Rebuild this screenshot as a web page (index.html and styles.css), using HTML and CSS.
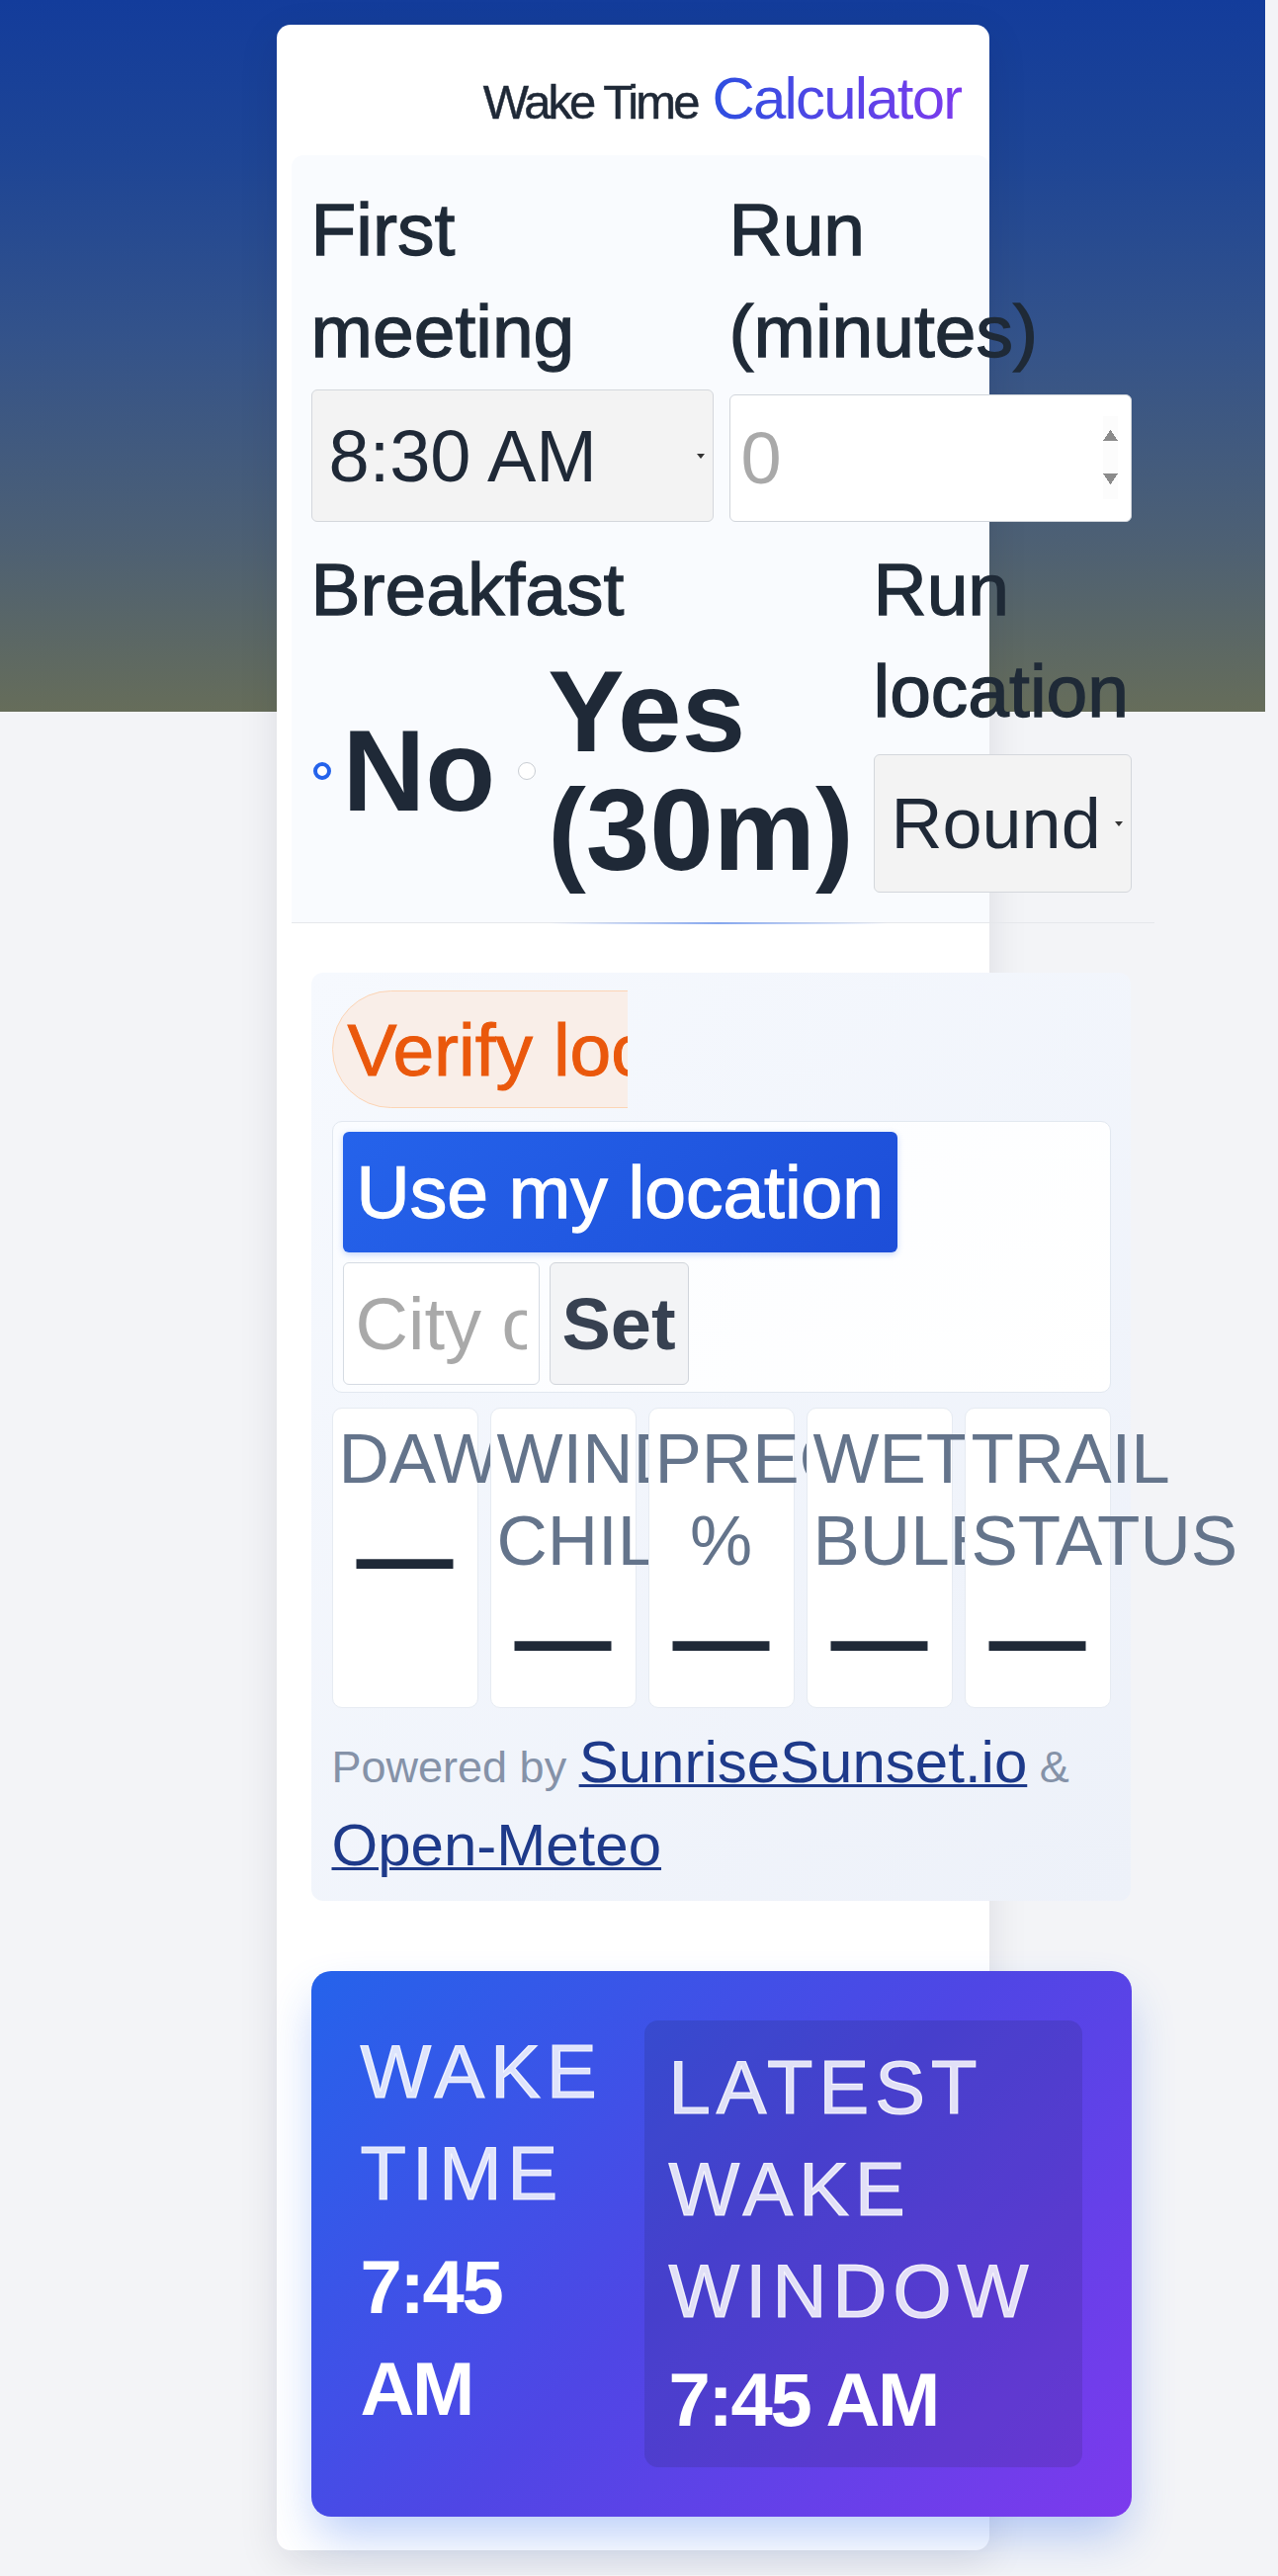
FILE: index.html
```html
<!DOCTYPE html>
<html lang="en">
<head>
<meta charset="utf-8">
<title>Wake Time Calculator</title>
<link rel="stylesheet" href="styles.css">
</head>
<body>
<div class="page">
  <main class="card">
    <header class="card-header">
      <h1 class="title"><span class="title-lead">Wake Time</span> <span class="title-accent">Calculator</span></h1>
    </header>

    <section class="form">
      <div class="row row-top">
        <div class="field">
          <label class="field-label" for="meeting">First meeting</label>
          <div class="select-wrap select-wrap-meeting">
            <select id="meeting" class="select select-meeting"><option>8:30 AM</option></select>
          </div>
        </div>
        <div class="field">
          <label class="field-label" for="run">Run (minutes)</label>
          <input id="run" class="number" type="number" placeholder="0" min="0">
        </div>
      </div>
      <div class="row row-bottom">
        <div class="field">
          <span class="field-label">Breakfast</span>
          <div class="radios">
            <label class="radio"><input type="radio" name="breakfast" checked><span>No</span></label>
            <label class="radio"><input type="radio" name="breakfast"><span>Yes (30m)</span></label>
          </div>
        </div>
        <div class="field">
          <label class="field-label" for="loc">Run location</label>
          <div class="select-wrap select-wrap-loc">
            <select id="loc" class="select select-loc"><option>Round trip</option></select>
          </div>
        </div>
      </div>
    </section>

    <div class="divider"></div>

    <section class="location">
      <div class="status-clip"><span class="status-pill">Verify location</span></div>
      <div class="loc-controls">
        <button class="btn-primary" type="button">Use my location</button>
        <div class="city-row">
          <input class="city" type="text" placeholder="City or ZIP">
          <button class="btn-set" type="button">Set</button>
        </div>
      </div>
      <div class="stats">
        <div class="stat"><div class="stat-label">Dawn</div><div class="stat-value">—</div></div>
        <div class="stat"><div class="stat-label">Wind chill</div><div class="stat-value">—</div></div>
        <div class="stat"><div class="stat-label">Precip %</div><div class="stat-value">—</div></div>
        <div class="stat"><div class="stat-label">Wet bulb</div><div class="stat-value">—</div></div>
        <div class="stat"><div class="stat-label">Trail status</div><div class="stat-value">—</div></div>
      </div>
      <p class="powered">Powered by <a href="#">SunriseSunset.io</a> &amp; <a href="#">Open-Meteo</a></p>
    </section>

    <section class="result">
      <div class="result-main">
        <div class="result-label">Wake time</div>
        <div class="result-value">7:45 AM</div>
      </div>
      <div class="result-panel">
        <div class="result-label">Latest wake window</div>
        <div class="result-value">7:45 AM</div>
      </div>
    </section>
  </main>
</div>
</body>
</html>
```

FILE: styles.css
```css
*, *::before, *::after { box-sizing: border-box; }

html, body { margin: 0; }

body {
  background:
    linear-gradient(180deg, #133c9b 0%, #1e4595 22%, #34538a 48%, #4d6074 76%, #666d5a 100%) 0 0 / 1280px 720px no-repeat,
    #f3f4f7;
  font-family: "Liberation Sans", Arial, sans-serif;
  color: #1f2937;
}

.page {
  width: 1280px;
  padding: 25px 0;
}

.card {
  width: 721px;
  margin: 0 auto;
  background: #ffffff;
  border-radius: 14px;
  box-shadow: 0 12px 40px rgba(15, 23, 42, 0.10);
  padding-bottom: 34px;
}

/* Header */
.card-header {
  height: 132px;
  padding: 41px 28px 0 0;
  text-align: right;
}

.title {
  margin: 0;
  font-size: 60px;
  line-height: 68px;
  font-weight: 400;
  letter-spacing: -0.03em;
  white-space: nowrap;
}

.title-lead {
  font-size: 49px;
  letter-spacing: -0.06em;
  color: #1f2937;
  -webkit-text-stroke: 0.5px #1f2937;
}

.title-accent {
  background: linear-gradient(90deg, #2d4fe0, #7c3aed);
  -webkit-background-clip: text;
  background-clip: text;
  color: transparent;
}

/* Form */
.form {
  margin-left: 15px;
  width: 706px;
  padding: 24px 0 30px 20px;
  background: #f9fbfe;
  border-radius: 12px 12px 0 0;
}

.row { display: grid; }

.row-top {
  grid-template-columns: 407px 407px;
  column-gap: 16px;
}

.row-bottom {
  grid-template-columns: 552px 261px;
  column-gap: 17px;
  margin-top: 17px;
}

.field {
  display: flex;
  flex-direction: column;
  align-items: stretch;
  min-width: 0;
}

.field-label {
  display: block;
  font-size: 75px;
  line-height: 103px;
  color: #1f2a37;
  -webkit-text-stroke: 1.3px #1f2a37;
}

.select-wrap {
  position: relative;
}

.select-wrap-meeting { margin-top: 7px; }
.select-wrap-loc { margin-top: 12px; }

.select-wrap::after {
  content: "";
  position: absolute;
  right: 9px;
  top: 50%;
  margin-top: -2px;
  border-left: 4px solid transparent;
  border-right: 4px solid transparent;
  border-top: 5px solid #333333;
}

.select {
  -webkit-appearance: none;
  appearance: none;
  display: block;
  width: 100%;
  margin: 0;
  padding: 0 26px 0 17px;
  font-family: inherit;
  font-size: 74px;
  color: #1f2937;
  background: #f3f3f3;
  border: 1px solid #d4d7dc;
  border-radius: 6px;
}

.select-meeting { height: 134px; }

.select-loc {
  height: 140px;
  font-size: 72px;
}

.number {
  display: block;
  width: 100%;
  height: 129px;
  margin: 12px 0 0;
  padding: 0 13px 0 11px;
  font-family: inherit;
  font-size: 74px;
  color: #1f2937;
  background: #ffffff;
  border: 1px solid #d1d5db;
  border-radius: 6px;
}

.number::placeholder { color: #a9a9a9; }
.number::-webkit-inner-spin-button { opacity: 1; }

.radios {
  display: flex;
  align-items: center;
  column-gap: 21px;
  width: 552px;
  margin-top: 12px;
}

.radio {
  display: flex;
  align-items: center;
  gap: 12px;
  font-size: 116px;
  line-height: 120px;
  font-weight: 700;
  color: #1f2937;
}

.radio:first-child { flex: none; }

.radio input {
  -webkit-appearance: none;
  appearance: none;
  flex: none;
  width: 18px;
  height: 18px;
  margin: 0 0 0 2px;
  border-radius: 50%;
  border: 1.5px solid #c9cdd3;
  background: #ffffff;
}

.radio input:checked {
  border: 4px solid #2563eb;
}

/* Divider */
.divider {
  position: relative;
  margin-left: 15px;
  width: 873px;
  height: 1px;
  background: #e5e7eb;
}

.divider::after {
  content: "";
  position: absolute;
  left: 30%;
  top: 0;
  width: 39%;
  height: 2px;
  background: linear-gradient(90deg, rgba(96, 140, 235, 0), rgba(96, 140, 235, 0.75), rgba(96, 140, 235, 0));
}

/* Location */
.location {
  margin: 50px 0 0 35px;
  width: 829px;
  padding: 18px 21px 9px;
  border-radius: 12px;
  background: linear-gradient(135deg, #f6f9fe, #edf1f9);
}

.status-clip {
  width: 299px;
  height: 119px;
  overflow: hidden;
}

.status-pill {
  display: inline-flex;
  align-items: center;
  height: 119px;
  padding: 0 30px 0 15px;
  border: 1.5px solid #fcd4b4;
  border-radius: 60px;
  background: #f9eee8;
  color: #ea580c;
  font-size: 75px;
  white-space: nowrap;
  -webkit-text-stroke: 1px #ea580c;
}

.loc-controls {
  margin-top: 13px;
  width: 788px;
  padding: 10px 10px 7px;
  border: 1px solid #e2e8f0;
  border-radius: 10px;
  background: linear-gradient(135deg, #fafcff, #ffffff);
}

.btn-primary {
  display: block;
  height: 122px;
  padding: 0 14px;
  font-family: inherit;
  font-size: 75px;
  color: #ffffff;
  border: 0;
  border-radius: 6px;
  background: linear-gradient(135deg, #2563eb, #1d4ed8);
  box-shadow: 0 2px 6px rgba(37, 99, 235, 0.25);
  -webkit-text-stroke: 1.3px #ffffff;
}

.city-row {
  display: flex;
  gap: 10px;
  margin-top: 10px;
}

.city {
  width: 199px;
  height: 124px;
  padding: 0 12px;
  font-family: inherit;
  font-size: 74px;
  color: #1f2937;
  background: #ffffff;
  border: 1px solid #d5dbe3;
  border-radius: 6px;
}

.city::placeholder { color: #a9a9a9; }

.btn-set {
  height: 124px;
  padding: 0 12px;
  font-family: inherit;
  font-size: 74px;
  font-weight: 700;
  color: #374151;
  background: #f3f4f6;
  border: 1px solid #d1d5db;
  border-radius: 6px;
}

.stats {
  display: grid;
  grid-template-columns: repeat(5, 148px);
  gap: 12px;
  margin-top: 15px;
}

.stat {
  position: relative;
  padding: 9px 6px 14px;
  text-align: center;
  background: #ffffff;
  border: 1px solid #e6ebf2;
  border-radius: 10px;
}

.stat-label {
  font-size: 71px;
  line-height: 83px;
  color: #64748b;
  text-transform: uppercase;
}

.stat-value {
  margin-top: 3px;
  font-size: 98px;
  line-height: 110px;
  font-weight: 700;
  color: #1f2937;
}

.powered {
  margin: 18px 0 0;
  font-size: 45px;
  line-height: 84px;
  color: #8592a8;
}

.powered a {
  font-size: 60px;
  line-height: 1;
  color: #1e3a8a;
  text-decoration: underline;
  text-decoration-thickness: 3px;
}

/* Result */
.result {
  display: grid;
  grid-template-columns: 271px 1fr;
  gap: 16px;
  align-items: start;
  margin: 71px 0 0 35px;
  width: 830px;
  padding: 50px;
  border-radius: 20px;
  background: linear-gradient(135deg, #2563eb 0%, #4f46e5 50%, #7c3aed 100%);
  box-shadow: 0 24px 48px -6px rgba(37, 99, 235, 0.32);
  color: #ffffff;
}

.result-label {
  font-size: 76px;
  line-height: 103px;
  letter-spacing: 0.08em;
  text-transform: uppercase;
  color: rgba(255, 255, 255, 0.84);
  -webkit-text-stroke: 1.2px rgba(255, 255, 255, 0.84);
}

.result-value {
  margin-top: 12px;
  font-size: 76px;
  line-height: 103px;
  font-weight: 700;
  letter-spacing: -0.03em;
  color: #ffffff;
}

.result-panel {
  padding: 16px 25px 17px;
  border-radius: 14px;
  background: rgba(15, 23, 42, 0.13);
}

.result-panel .result-value { margin-top: 7px; }
```
